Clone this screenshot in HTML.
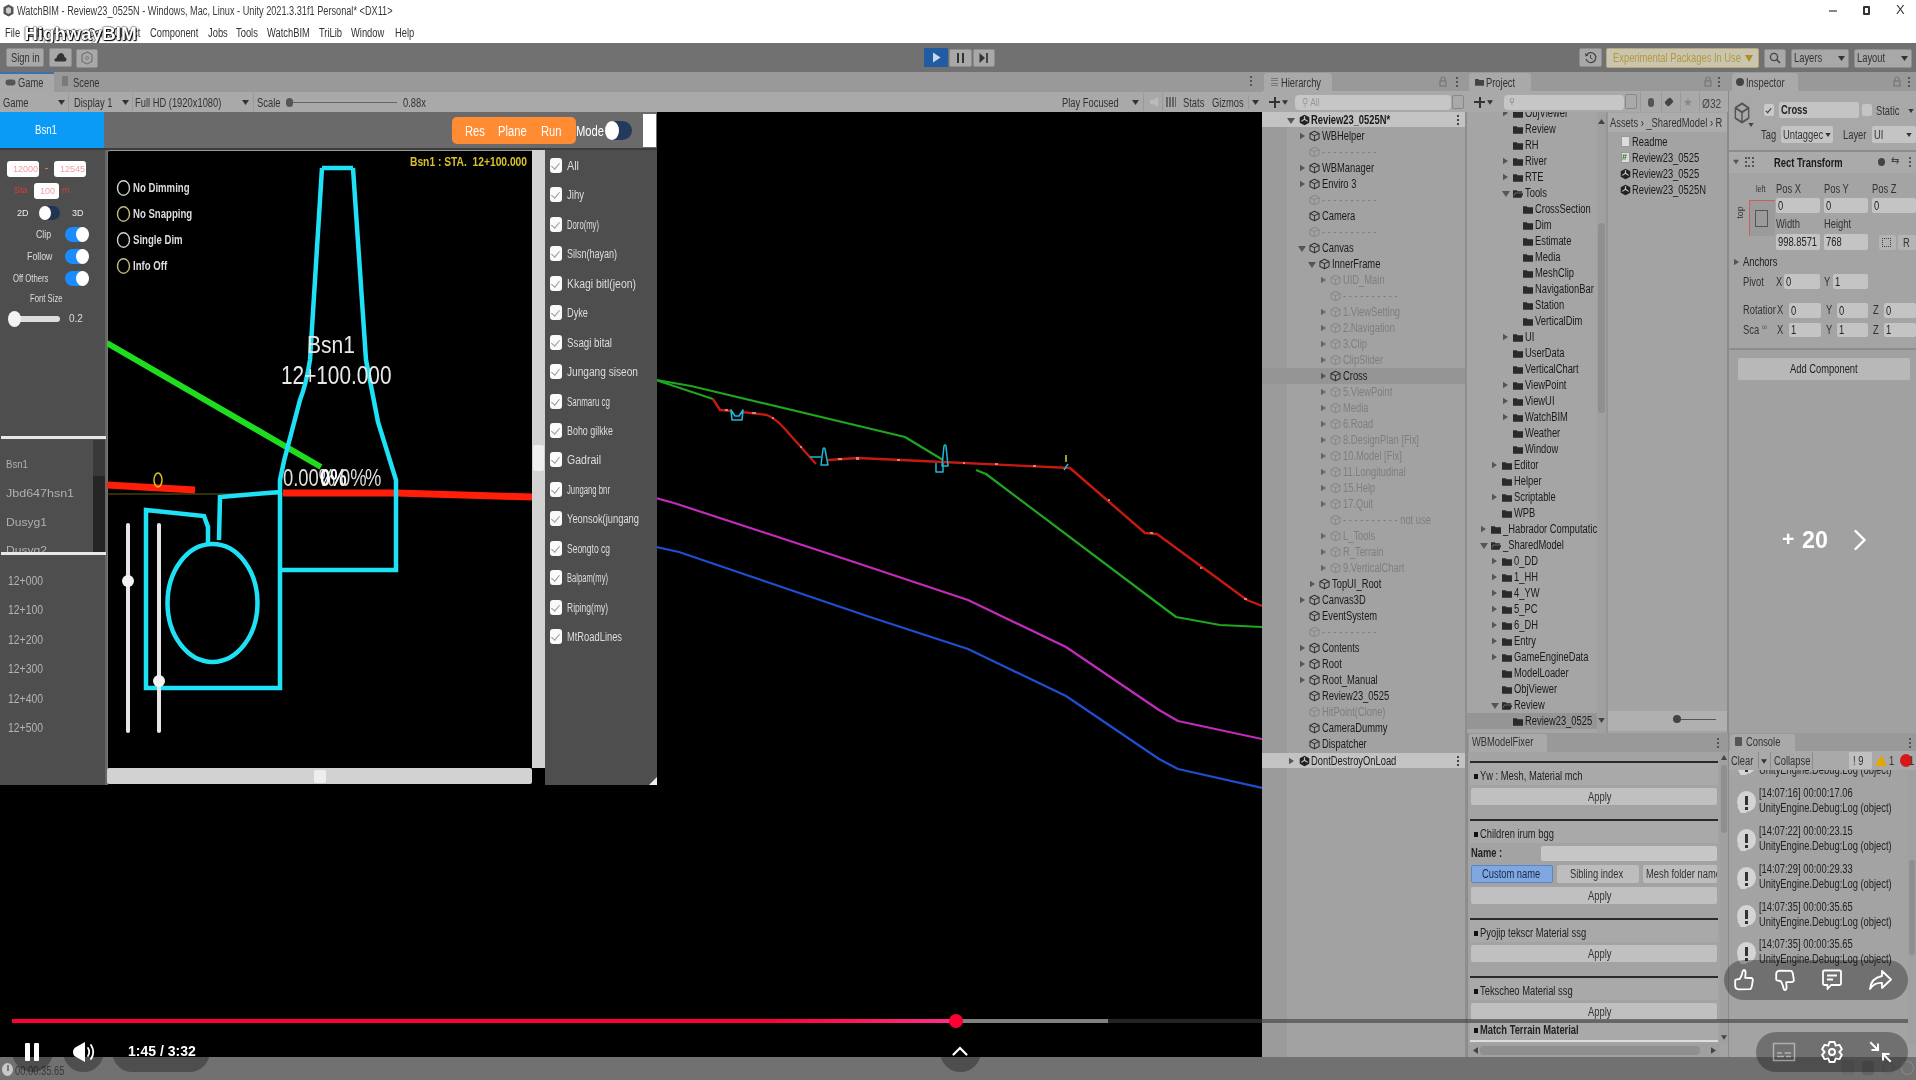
<!DOCTYPE html>
<html><head><meta charset="utf-8">
<style>
*{margin:0;padding:0;box-sizing:border-box}
html,body{width:1916px;height:1080px;overflow:hidden;background:#000;font-family:"Liberation Sans",sans-serif}
body{filter:blur(.6px)}
.a{position:absolute}
.t{position:absolute;white-space:nowrap;line-height:1}
.btn{background:#a8a8a8;border:1px solid #8e8e8e;border-radius:2px}
.c8{transform:scaleX(.8);transform-origin:0 0}
.c7{transform:scaleX(.7);transform-origin:0 0}
.inp{background:#fff;border-radius:3px}
.tg{width:23px;height:15px;border-radius:8px;background:#1a8cff}
.kn{width:13px;height:15px;border-radius:50%;background:#fff}
.ck{width:12px;height:15px;border-radius:3px;background:#fafafa}
.ck::after{content:"";position:absolute;left:3px;top:3px;width:4px;height:7px;border-right:1.3px solid #999;border-bottom:1.3px solid #999;transform:rotate(40deg)}
.c{transform:scaleX(.78);transform-origin:0 0}
#title{left:0;top:0;width:1916px;height:43px;background:#fff}
#tbar{left:0;top:43px;width:1916px;height:29px;background:#717171}
#gtabs{left:0;top:72px;width:1262px;height:20px;background:#999}
#gtool{left:0;top:92px;width:1262px;height:20px;background:#a9a9a9}
#game{left:0;top:112px;width:1262px;height:945px;background:#000}
#hier{left:1262px;top:72px;width:205px;height:985px;background:#a2a2a2}
#proj{left:1467px;top:72px;width:261px;height:661px;background:#a5a5a5}
#insp{left:1728px;top:72px;width:188px;height:661px;background:#a3a3a3}
#wbm{left:1467px;top:733px;width:261px;height:324px;background:#a5a5a5}
#cons{left:1728px;top:733px;width:188px;height:324px;background:#a5a5a5}
#status{left:0;top:1057px;width:1916px;height:23px;background:#717171}
</style></head><body>

<svg width="0" height="0" style="position:absolute">
 <defs>
  <symbol id="cube" viewBox="0 0 12 12"><path d="M6 0.8 L11 3.2 L11 8.8 L6 11.2 L1 8.8 L1 3.2Z M1 3.2 L6 5.6 L11 3.2 M6 5.6 L6 11.2" fill="none" stroke="currentColor" stroke-width="1.1" stroke-linejoin="round"/></symbol>
  <symbol id="unity" viewBox="0 0 12 12"><path d="M6 0.3 L11.2 3 L11.2 9 L6 11.7 L0.8 9 L0.8 3Z" fill="currentColor"/><path d="M6 1.8 L6 5.2 M6 5.2 L2.5 7.5 M6 5.2 L9.5 7.5" stroke="#c8c8c8" stroke-width="1.3"/></symbol>
  <symbol id="tri" viewBox="0 0 6 8"><path d="M0 0 L6 4 L0 8Z" fill="currentColor"/></symbol>
  <symbol id="tridown" viewBox="0 0 8 6"><path d="M0 0 L8 0 L4 6Z" fill="currentColor"/></symbol>
  <symbol id="folder" viewBox="0 0 12 10"><path d="M0 1 H4.5 L5.5 2.2 H12 V10 H0Z" fill="currentColor"/></symbol>
  <symbol id="folderopen" viewBox="0 0 12 10"><path d="M0 1 H4.5 L5.5 2.2 H11 V4 H2.5 L0 10Z M0 10 L3 4.8 H12.5 L10 10Z" fill="currentColor"/></symbol>
 </defs>
</svg>

<div id="title" class="a">
 <svg class="a" style="left:3px;top:4px" width="11" height="13" viewBox="0 0 11 13"><path d="M5.5 0.5 L10.5 3.2 L10.5 9.8 L5.5 12.5 L0.5 9.8 L0.5 3.2 Z" fill="#555"/><path d="M5.5 3 L8 4.5 L8 8.5 L5.5 10 L3 8.5 L3 4.5Z" fill="#ccc"/></svg>
 <div class="t" style="left:17px;top:5px;font-size:12px;color:#3a3a3a;transform:scaleX(.765);transform-origin:0 0">WatchBIM - Review23_0525N - Windows, Mac, Linux - Unity 2021.3.31f1 Personal* &lt;DX11&gt;</div>
 <div class="t c" style="left:5px;top:27px;font-size:12px;color:#333">File</div>
 <div class="t c" style="left:28px;top:27px;font-size:12px;color:#333">Edit &nbsp;&nbsp;Assets &nbsp;&nbsp;GameObject</div>
 <div class="t c" style="left:150px;top:27px;font-size:12px;color:#333">Component</div>
 <div class="t c" style="left:208px;top:27px;font-size:12px;color:#333">Jobs</div>
 <div class="t c" style="left:236px;top:27px;font-size:12px;color:#333">Tools</div>
 <div class="t c" style="left:267px;top:27px;font-size:12px;color:#333">WatchBIM</div>
 <div class="t c" style="left:319px;top:27px;font-size:12px;color:#333">TriLib</div>
 <div class="t c" style="left:351px;top:27px;font-size:12px;color:#333">Window</div>
 <div class="t c" style="left:395px;top:27px;font-size:12px;color:#333">Help</div>
 <div class="t" style="left:24px;top:24px;font-size:19px;font-weight:bold;color:#fff;text-shadow:0 0 2px #000,0 0 1px #000,1px 1px 1px #000">HighwayBIM</div>
 <div class="a" style="left:1829px;top:10px;width:8px;height:2px;background:#888"></div>
 <div class="a" style="left:1863px;top:6px;width:7px;height:9px;border:2px solid #333;border-radius:1px"></div>
 <div class="t" style="left:1896px;top:3px;font-size:13px;color:#333">X</div>
</div>


<div id="tbar" class="a">
 <div class="a btn" style="left:6px;top:5px;width:38px;height:19px"></div>
 <div class="t c" style="left:11px;top:9px;font-size:12px;color:#333">Sign in</div>
 <div class="a btn" style="left:49px;top:5px;width:23px;height:19px"></div>
 <svg class="a" style="left:54px;top:9px" width="13" height="10" viewBox="0 0 13 10"><path d="M2 9.5 Q0 9.5 0.5 7.5 Q1 6 2.5 6 Q3 2.5 6.5 1 Q10 1 10.5 5 Q12.5 5.5 12.5 7.5 Q12.5 9.5 10.5 9.5Z" fill="#333"/></svg>
 <div class="a btn" style="left:76px;top:6px;width:22px;height:19px"></div>
 <svg class="a" style="left:81px;top:8px" width="12" height="14" viewBox="0 0 12 14"><path d="M6 1 L11 3.5 L11 10.5 L6 13 L1 10.5 L1 3.5Z" fill="none" stroke="#666" stroke-width="1"/><circle cx="6" cy="7" r="1.5" fill="none" stroke="#777" stroke-width=".8"/></svg>
 <div class="a" style="left:924px;top:5px;width:24px;height:19px;background:#215ca3"></div>
 <svg class="a" style="left:932px;top:9px" width="9" height="11" viewBox="0 0 9 11"><path d="M1 0.5 L8.5 5.5 L1 10.5Z" fill="#c9d7ee"/></svg>
 <div class="a btn" style="left:949px;top:6px;width:23px;height:18px"></div>
 <div class="a" style="left:957px;top:10px;width:2px;height:10px;background:#333"></div>
 <div class="a" style="left:962px;top:10px;width:2px;height:10px;background:#333"></div>
 <div class="a btn" style="left:973px;top:6px;width:22px;height:18px"></div>
 <svg class="a" style="left:979px;top:10px" width="10" height="10" viewBox="0 0 10 10"><path d="M0.5 0 L6 5 L0.5 10Z" fill="#333"/><rect x="7" y="0" width="2" height="10" fill="#444"/></svg>
 <div class="a btn" style="left:1579px;top:5px;width:23px;height:19px"></div>
 <svg class="a" style="left:1584px;top:8px" width="13" height="13" viewBox="0 0 13 13"><path d="M2.5 4 A5 5 0 1 1 2 8" fill="none" stroke="#444" stroke-width="1.2"/><path d="M6.5 4 V7 L8.5 8" fill="none" stroke="#444" stroke-width="1"/><path d="M1 2 L1.5 5.5 L4.5 4.5Z" fill="#444"/></svg>
 <div class="a" style="left:1606px;top:5px;width:153px;height:20px;background:#cac5b0;border:1px solid #b8a878;border-radius:2px"></div>
 <div class="t c" style="left:1613px;top:9px;font-size:12px;color:#b39a3a">Experimental Packages In Use</div>
 <svg class="a" style="left:1745px;top:12px" width="8" height="7" viewBox="0 0 8 7"><path d="M0 0 L8 0 L4 7Z" fill="#b08f20"/></svg>
 <div class="a btn" style="left:1764px;top:6px;width:22px;height:19px"></div>
 <svg class="a" style="left:1769px;top:9px" width="12" height="12" viewBox="0 0 12 12"><circle cx="5" cy="5" r="3.6" fill="none" stroke="#444" stroke-width="1.3"/><path d="M7.5 7.5 L11 11" stroke="#444" stroke-width="1.6"/></svg>
 <div class="a btn" style="left:1791px;top:6px;width:58px;height:19px"></div>
 <div class="t c" style="left:1794px;top:9px;font-size:12px;color:#333">Layers</div>
 <svg class="a" style="left:1838px;top:13px" width="7" height="5" viewBox="0 0 7 5"><path d="M0 0 L7 0 L3.5 5Z" fill="#333"/></svg>
 <div class="a btn" style="left:1854px;top:6px;width:58px;height:19px"></div>
 <div class="t c" style="left:1857px;top:9px;font-size:12px;color:#333">Layout</div>
 <svg class="a" style="left:1901px;top:13px" width="7" height="5" viewBox="0 0 7 5"><path d="M0 0 L7 0 L3.5 5Z" fill="#333"/></svg>
</div>


<div id="gtabs" class="a">
 <div class="a" style="left:0;top:0;width:54px;height:20px;background:#a8a8a8;border-top:2px solid #3f6fb0"></div>
 <svg class="a" style="left:5px;top:7px" width="11" height="7" viewBox="0 0 11 7"><rect x="0.5" y="0.5" width="10" height="6" rx="3" fill="#555"/></svg>
 <div class="t c" style="left:18px;top:5px;font-size:12px;color:#333">Game</div>
 <div class="a" style="left:62px;top:4px;width:6px;height:10px;background:#7a7a7a;border-radius:1px"></div>
 <div class="t c" style="left:73px;top:5px;font-size:12px;color:#333">Scene</div>
 <div class="a" style="left:1250px;top:4px;width:2px;height:2px;background:#555;box-shadow:0 4px #555,0 8px #555"></div>
</div>
<div id="gtool" class="a">
 <div class="t c" style="left:3px;top:5px;font-size:12px;color:#333">Game</div>
 <svg class="a" style="left:58px;top:8px" width="7" height="5" viewBox="0 0 7 5"><path d="M0 0 L7 0 L3.5 5Z" fill="#333"/></svg>
 <div class="a" style="left:68px;top:1px;width:1px;height:18px;background:#999"></div>
 <div class="t c" style="left:74px;top:5px;font-size:12px;color:#333">Display 1</div>
 <svg class="a" style="left:122px;top:8px" width="7" height="5" viewBox="0 0 7 5"><path d="M0 0 L7 0 L3.5 5Z" fill="#333"/></svg>
 <div class="a" style="left:132px;top:1px;width:1px;height:18px;background:#999"></div>
 <div class="t c" style="left:135px;top:5px;font-size:12px;color:#333">Full HD (1920x1080)</div>
 <svg class="a" style="left:242px;top:8px" width="7" height="5" viewBox="0 0 7 5"><path d="M0 0 L7 0 L3.5 5Z" fill="#333"/></svg>
 <div class="a" style="left:253px;top:1px;width:1px;height:18px;background:#999"></div>
 <div class="t c" style="left:257px;top:5px;font-size:12px;color:#333">Scale</div>
 <div class="a" style="left:293px;top:10px;width:104px;height:1px;background:#666"></div>
 <div class="a" style="left:286px;top:6px;width:7px;height:9px;border-radius:4px;background:#555"></div>
 <div class="t c" style="left:403px;top:5px;font-size:12px;color:#333">0.88x</div>
 <div class="t c" style="left:1062px;top:5px;font-size:12px;color:#333">Play Focused</div>
 <svg class="a" style="left:1132px;top:8px" width="7" height="5" viewBox="0 0 7 5"><path d="M0 0 L7 0 L3.5 5Z" fill="#333"/></svg>
 <div class="a" style="left:1143px;top:1px;width:1px;height:18px;background:#999"></div>
 <svg class="a" style="left:1150px;top:5px" width="9" height="10" viewBox="0 0 9 10"><path d="M0 3 H3 L8 0 V10 L3 7 H0Z" fill="#bbb"/></svg>
 <div class="a" style="left:1162px;top:1px;width:1px;height:18px;background:#999"></div>
 <div class="a" style="left:1166px;top:5px;width:10px;height:10px;background:repeating-linear-gradient(90deg,#666 0 2px,#aaa 2px 3px)"></div>
 <div class="t c" style="left:1183px;top:5px;font-size:12px;color:#333">Stats</div>
 <div class="t c" style="left:1212px;top:5px;font-size:12px;color:#333">Gizmos</div>
 <div class="a" style="left:1248px;top:3px;width:1px;height:14px;background:#999"></div>
 <svg class="a" style="left:1252px;top:8px" width="7" height="5" viewBox="0 0 7 5"><path d="M0 0 L7 0 L3.5 5Z" fill="#333"/></svg>
</div>


<div id="game" class="a">
 <!-- overlay top band -->
 <div class="a" style="left:0;top:0;width:104px;height:36px;background:#0a9bf6"></div>
 <div class="t" style="left:35px;top:12px;font-size:12px;color:#fff;transform:scaleX(0.804);transform-origin:0 0">Bsn1</div>
 <div class="a" style="left:104px;top:0;width:553px;height:36px;background:#6a6a6a"></div>
 <div class="a" style="left:0;top:36px;width:657px;height:2px;background:#3c3c3c"></div>
 <div class="a" style="left:452px;top:5px;width:124px;height:27px;background:#ff8b33;border-radius:5px"></div>
 <div class="t c8" style="left:465px;top:12px;font-size:14px;color:#fff">Res</div>
 <div class="t c8" style="left:498px;top:12px;font-size:14px;color:#fff">Plane</div>
 <div class="t c8" style="left:541px;top:12px;font-size:14px;color:#fff">Run</div>
 <div class="t c8" style="left:576px;top:12px;font-size:14px;color:#fff">Mode</div>
 <div class="a" style="left:606px;top:9px;width:26px;height:19px;border-radius:10px;background:#243a5c"></div>
 <div class="a" style="left:605px;top:9px;width:14px;height:19px;border-radius:50%;background:#fff"></div>
 <div class="a" style="left:643px;top:2px;width:13px;height:33px;background:#fff"></div>
 <!-- left panel -->
 <div class="a" style="left:0;top:38px;width:105px;height:635px;background:#4e4e4e"></div>
 <div class="a" style="left:105px;top:38px;width:3px;height:635px;background:#676767"></div>
 <div class="a inp" style="left:7px;top:49px;width:32px;height:16px"></div>
 <div class="t" style="left:13px;top:53px;font-size:9px;color:#f0a0a0">12000</div>
 <div class="a" style="left:45px;top:56px;width:3px;height:1px;background:#e07070"></div>
 <div class="a inp" style="left:54px;top:49px;width:32px;height:16px"></div>
 <div class="t" style="left:60px;top:53px;font-size:9px;color:#f0a0a0">12545</div>
 <div class="t" style="left:14px;top:74px;font-size:9px;color:#e03a3a">Sta</div>
 <div class="a inp" style="left:34px;top:71px;width:25px;height:16px"></div>
 <div class="t" style="left:40px;top:75px;font-size:9px;color:#f0a0a0">100</div>
 <div class="t" style="left:62px;top:74px;font-size:9px;color:#e03a3a">m</div>
 <div class="t" style="left:17px;top:97px;font-size:9px;color:#eee">2D</div>
 <div class="a" style="left:40px;top:94px;width:20px;height:14px;border-radius:7px;background:#233452"></div>
 <div class="a" style="left:39px;top:94px;width:12px;height:14px;border-radius:50%;background:#fff"></div>
 <div class="t" style="left:72px;top:97px;font-size:9px;color:#eee">3D</div>
 <div class="t c8" style="left:36px;top:117px;font-size:11px;color:#ddd">Clip</div>
 <div class="a tg" style="left:65px;top:115px"></div><div class="a kn" style="left:76px;top:115px"></div>
 <div class="t c8" style="left:27px;top:139px;font-size:11px;color:#ddd">Follow</div>
 <div class="a tg" style="left:65px;top:137px"></div><div class="a kn" style="left:76px;top:137px"></div>
 <div class="t c7" style="left:13px;top:161px;font-size:11px;color:#ddd">Off Others</div>
 <div class="a tg" style="left:65px;top:159px"></div><div class="a kn" style="left:76px;top:159px"></div>
 <div class="t c7" style="left:30px;top:181px;font-size:11px;color:#ddd">Font Size</div>
 <div class="a" style="left:14px;top:204px;width:46px;height:6px;border-radius:3px;background:#ddd"></div>
 <div class="a" style="left:8px;top:199px;width:13px;height:16px;border-radius:50%;background:#f4f4f4"></div>
 <div class="t" style="left:69px;top:202px;font-size:10px;color:#ddd">0.2</div>
 <div class="a" style="left:1px;top:324px;width:105px;height:3px;background:#e8e8e8"></div>
 <div class="a" style="left:93px;top:328px;width:12px;height:36px;background:#393939"></div>
 <div class="a" style="left:93px;top:364px;width:12px;height:76px;background:#262424"></div>
 <div class="t" style="left:6px;top:347px;font-size:11px;color:#b0b0b0;transform:scaleX(0.877);transform-origin:0 0">Bsn1</div>
 <div class="t" style="left:6px;top:376px;font-size:11px;color:#b0b0b0;transform:scaleX(1.135);transform-origin:0 0">Jbd647hsn1</div>
 <div class="t" style="left:6px;top:405px;font-size:11px;color:#b0b0b0;transform:scaleX(1.100);transform-origin:0 0">Dusyg1</div>
 <div class="a" style="left:0;top:428px;width:93px;height:12px;overflow:hidden"><div class="t" style="left:6px;top:5px;font-size:11px;color:#b0b0b0;transform:scaleX(1.100);transform-origin:0 0">Dusyg2</div></div>
 <div class="a" style="left:1px;top:440px;width:105px;height:3px;background:#e8e8e8"></div>
 <div class="t c8" style="left:8px;top:462px;font-size:13px;color:#b4b4b4">12+000</div>
<div class="t c8" style="left:8px;top:491px;font-size:13px;color:#b4b4b4">12+100</div>
<div class="t c8" style="left:8px;top:521px;font-size:13px;color:#b4b4b4">12+200</div>
<div class="t c8" style="left:8px;top:550px;font-size:13px;color:#b4b4b4">12+300</div>
<div class="t c8" style="left:8px;top:580px;font-size:13px;color:#b4b4b4">12+400</div>
<div class="t c8" style="left:8px;top:609px;font-size:13px;color:#b4b4b4">12+500</div>
 <!-- black canvas border & scrollbars -->
 <div class="a" style="left:107px;top:38px;width:426px;height:619px;border-top:1px solid #9a9a9a;border-left:1px solid #777;border-top-left-radius:3px"></div>
 <div class="a" style="left:532px;top:38px;width:13px;height:618px;background:#d2d2d2"></div>
 <div class="a" style="left:533px;top:333px;width:11px;height:26px;background:#eeeeee;border-radius:2px"></div>
 <div class="a" style="left:107px;top:656px;width:425px;height:16px;background:#d2d2d2;border-radius:2px"></div>
 <div class="a" style="left:314px;top:658px;width:12px;height:13px;background:#eeeeee;border-radius:2px"></div>
 <div class="a" style="left:532px;top:656px;width:13px;height:16px;background:#000"></div>
 <!-- checkbox panel -->
 <div class="a" style="left:545px;top:38px;width:112px;height:635px;background:#4e4e4e"></div>
 <div class="a ck" style="left:550px;top:46px"></div><div class="t" style="left:567px;top:48px;font-size:12px;color:#ddd;transform:scaleX(0.899);transform-origin:0 0">All</div>
<div class="a ck" style="left:550px;top:75px"></div><div class="t" style="left:567px;top:77px;font-size:12px;color:#ddd;transform:scaleX(0.796);transform-origin:0 0">Jihy</div>
<div class="a ck" style="left:550px;top:105px"></div><div class="t" style="left:567px;top:107px;font-size:12px;color:#ddd;transform:scaleX(0.640);transform-origin:0 0">Doro(my)</div>
<div class="a ck" style="left:550px;top:134px"></div><div class="t" style="left:567px;top:136px;font-size:12px;color:#ddd;transform:scaleX(0.750);transform-origin:0 0">Silsn(hayan)</div>
<div class="a ck" style="left:550px;top:164px"></div><div class="t" style="left:567px;top:166px;font-size:12px;color:#ddd;transform:scaleX(0.869);transform-origin:0 0">Kkagi bitl(jeon)</div>
<div class="a ck" style="left:550px;top:193px"></div><div class="t" style="left:567px;top:195px;font-size:12px;color:#ddd;transform:scaleX(0.768);transform-origin:0 0">Dyke</div>
<div class="a ck" style="left:550px;top:223px"></div><div class="t" style="left:567px;top:225px;font-size:12px;color:#ddd;transform:scaleX(0.813);transform-origin:0 0">Ssagi bital</div>
<div class="a ck" style="left:550px;top:252px"></div><div class="t" style="left:567px;top:254px;font-size:12px;color:#ddd;transform:scaleX(0.844);transform-origin:0 0">Jungang siseon</div>
<div class="a ck" style="left:550px;top:282px"></div><div class="t" style="left:567px;top:284px;font-size:12px;color:#ddd;transform:scaleX(0.665);transform-origin:0 0">Sanmaru cg</div>
<div class="a ck" style="left:550px;top:311px"></div><div class="t" style="left:567px;top:313px;font-size:12px;color:#ddd;transform:scaleX(0.741);transform-origin:0 0">Boho gilkke</div>
<div class="a ck" style="left:550px;top:340px"></div><div class="t" style="left:567px;top:342px;font-size:12px;color:#ddd;transform:scaleX(0.879);transform-origin:0 0">Gadrail</div>
<div class="a ck" style="left:550px;top:370px"></div><div class="t" style="left:567px;top:372px;font-size:12px;color:#ddd;transform:scaleX(0.644);transform-origin:0 0">Jungang bnr</div>
<div class="a ck" style="left:550px;top:399px"></div><div class="t" style="left:567px;top:401px;font-size:12px;color:#ddd;transform:scaleX(0.780);transform-origin:0 0">Yeonsok(jungang</div>
<div class="a ck" style="left:550px;top:429px"></div><div class="t" style="left:567px;top:431px;font-size:12px;color:#ddd;transform:scaleX(0.708);transform-origin:0 0">Seongto cg</div>
<div class="a ck" style="left:550px;top:458px"></div><div class="t" style="left:567px;top:460px;font-size:12px;color:#ddd;transform:scaleX(0.634);transform-origin:0 0">Balpam(my)</div>
<div class="a ck" style="left:550px;top:488px"></div><div class="t" style="left:567px;top:490px;font-size:12px;color:#ddd;transform:scaleX(0.707);transform-origin:0 0">Riping(my)</div>
<div class="a ck" style="left:550px;top:517px"></div><div class="t" style="left:567px;top:519px;font-size:12px;color:#ddd;transform:scaleX(0.778);transform-origin:0 0">MtRoadLines</div>
 <svg class="a" style="left:649px;top:665px" width="8" height="8"><path d="M8 0 L8 8 L0 8Z" fill="#eee"/></svg>
</div>


<svg class="a" style="left:0;top:0" width="1262" height="1057" viewBox="0 0 1262 1057">
 <defs><clipPath id="cv"><rect x="107" y="151" width="425" height="617"/></clipPath>
 <clipPath id="pv"><rect x="657" y="112" width="605" height="945"/></clipPath></defs>
 <g clip-path="url(#cv)" fill="none" stroke-linejoin="miter">
  <path d="M107 343 L321 467" stroke="#1fdc1f" stroke-width="6"/>
  <path d="M107 485 L195 490" stroke="#ff1e0a" stroke-width="7"/>
  <path d="M107 494 L283 494" stroke="#6a5a10" stroke-width="1"/>
  <path d="M283 493 L396 493 L532 497" stroke="#ff1e0a" stroke-width="7"/>
  <path d="M322 168 L353 168 M322 168 L310 360 Q306 385 300 400 L284 461 L280 480 L280 688 L146 688 L146 510 L204 516 L208 527 L208 543 M353 168 L366 360 L378 422 L396 480 L396 570 L280 570 M280 492 L220 497 L219 540" stroke="#1ee1f5" stroke-width="4.5"/>
  <ellipse cx="212.5" cy="603" rx="45" ry="59" stroke="#1ee1f5" stroke-width="4.5"/>
  <path d="M128 525 L128 731 M159 525 L159 731" stroke="#e6e6e6" stroke-width="4" stroke-linecap="round"/>
  <circle cx="128" cy="581" r="6" fill="#f2f2f2"/>
  <circle cx="159" cy="681" r="6" fill="#f2f2f2"/>
  <g stroke="#d0d0d0" stroke-width="1.4"><ellipse cx="123.5" cy="188" rx="6" ry="7.2"/><ellipse cx="123.5" cy="214" rx="6" ry="7.2" stroke="#c8b880"/><ellipse cx="123.5" cy="240" rx="6" ry="7.2"/><ellipse cx="123.5" cy="266" rx="6" ry="7.2" stroke="#c8b880"/></g>
  <ellipse cx="158" cy="480" rx="4" ry="7" stroke="#d8c020" stroke-width="1.5"/>
 </g>
 <g clip-path="url(#pv)" fill="none" stroke-width="2.2" stroke-linejoin="round">
  <path d="M656 380 L691 386 L905 437 L943 460" stroke="#1fa51f"/>
  <path d="M656 380 L713 399" stroke="#1fa51f"/>
  <path d="M713 399 L720 410 L731 411 M742 412 L767 415 Q776 419 784 428 L816 464 M828 460 L858 458 L943 462 L1070 468 L1145 533 L1157 534 L1247 600 L1262 606" stroke="#c41a10" stroke-width="2.4"/>
  <path d="M976 470 L986 474 L1176 617 L1220 625 L1262 627" stroke="#1fa51f"/>
  <path d="M656 498 L674 503 L854 562 L968 600 L1066 647 L1159 710 L1178 721 L1262 739" stroke="#c22cba"/>
  <path d="M656 547 L679 552 L870 617 L968 649 L1066 696 L1159 759 L1178 769 L1262 788" stroke="#1f4fd0"/>
  <path d="M731 410 L732 420 L742 420 L743 410 L739 416 L735 416Z" stroke="#1fb8d8" stroke-width="1.6"/>
  <path d="M810 457 L821 457 M821 465 L823 449 Q824 447 825 449 L828 465Z" stroke="#1fb8d8" stroke-width="1.5"/>
  <path d="M942 466 L944 446 Q945 444 946 446 L948 466Z M936 463 L936 472 L943 472 L943 463" stroke="#1fb8d8" stroke-width="1.5"/>
  <path d="M1066 455 L1066 462" stroke="#e0d020" stroke-width="1.5"/>
  <path d="M1064 470 L1068 464" stroke="#1fb8d8" stroke-width="1.5"/>
  <g fill="#e0b0b0" stroke="none" opacity=".7"><rect x="725" y="409" width="3" height="2"/><rect x="752" y="412" width="4" height="2"/><rect x="772" y="417" width="2" height="2"/><rect x="800" y="446" width="2" height="2"/><rect x="838" y="458" width="4" height="2"/><rect x="856" y="457" width="3" height="3"/><rect x="897" y="459" width="3" height="2"/><rect x="963" y="462" width="2" height="2"/><rect x="995" y="463" width="3" height="2"/><rect x="1033" y="465" width="3" height="2"/><rect x="1108" y="499" width="2" height="2"/><rect x="1150" y="532" width="3" height="2"/><rect x="1200" y="567" width="2" height="2"/><rect x="1244" y="598" width="3" height="2"/></g>
 </g>
</svg>

<div class="t c8" style="left:133px;top:182px;font-size:12px;color:#ddd;font-weight:bold">No Dimming</div>
<div class="t c8" style="left:133px;top:208px;font-size:12px;color:#ddd;font-weight:bold">No Snapping</div>
<div class="t c8" style="left:133px;top:234px;font-size:12px;color:#ddd;font-weight:bold">Single Dim</div>
<div class="t c8" style="left:133px;top:260px;font-size:12px;color:#ddd;font-weight:bold">Info Off</div>
<div class="t" style="left:410px;top:156px;font-size:12px;color:#d8c22a;font-weight:bold;transform:scaleX(0.855);transform-origin:0 0">Bsn1 : STA.&nbsp; 12+100.000</div>
<div class="t" style="left:307px;top:333px;font-size:24px;color:#e8e8e8;transform:scaleX(0.877);transform-origin:0 0">Bsn1</div>
<div class="t c8" style="left:281px;top:362px;font-size:26px;color:#e8e8e8">12+100.000</div>
<div class="t c8" style="left:283px;top:467px;font-size:23px;color:#e0e0e0">0.00%</div>
<div class="t c8" style="left:320px;top:467px;font-size:23px;color:#fff;font-weight:bold">0%</div>
<div class="t c8" style="left:340px;top:467px;font-size:23px;color:#ddd">0%</div>
<div class="t c8" style="left:365px;top:467px;font-size:23px;color:#ddd">%</div>

<!--HIER-->
<div id="hier" class="a">
 <div class="a" style="left:0;top:0;width:205px;height:19px;background:#999"></div>
 <div class="a" style="left:2px;top:1px;width:68px;height:19px;background:#a9a9a9;border-radius:3px 3px 0 0"></div>
 <div class="a" style="left:9px;top:6px;width:7px;height:9px;background:repeating-linear-gradient(180deg,#777 0 1px,transparent 1px 2.5px)"></div>
 <div class="t c" style="left:19px;top:5px;font-size:12px;color:#333">Hierarchy</div>
 <svg class="a" style="left:177px;top:4px" width="8" height="11" viewBox="0 0 8 11"><path d="M2 5 V3 A2 2 0 0 1 6 3 V5" fill="none" stroke="#777" stroke-width="1.2"/><rect x="1" y="5" width="6" height="5" fill="none" stroke="#777" stroke-width="1.2"/></svg>
 <div class="a" style="left:194px;top:5px;width:2px;height:2px;background:#555;box-shadow:0 4px #555,0 8px #555"></div>
 <div class="a" style="left:0;top:19px;width:205px;height:21px;background:#a9a9a9"></div>
 <div class="a" style="left:7px;top:29px;width:11px;height:2px;background:#333"></div><div class="a" style="left:11.5px;top:24.5px;width:2px;height:11px;background:#333"></div>
 <svg class="a" style="left:20px;top:28px" width="6" height="5"><use href="#tridown" fill="#333" color="#333"/></svg>
 <div class="a" style="left:33px;top:23px;width:156px;height:15px;background:#c6c6c6;border-radius:4px"></div>
 <div class="t c" style="left:40px;top:25px;font-size:11px;color:#999">&#9906; All</div>
 <div class="a" style="left:190px;top:23px;width:12px;height:14px;border:1px solid #888;border-radius:2px"></div>
 <div class="a" style="left:0;top:40px;width:25px;height:945px;background:#9b9b9b"></div>
 <div class="a" style="left:203px;top:40px;width:2px;height:945px;background:#8e8e8e"></div>
 <div class="a" style="left:0;top:40px;width:203px;height:15px;background:#c3c3c3"></div>
 <div class="a" style="left:195px;top:43px;width:2px;height:2px;background:#444;box-shadow:0 4px #444,0 8px #444"></div>
 <svg class="a" style="left:37.0px;top:42px;color:#222" width="11" height="12"><use href="#unity"/></svg>
 <svg class="a" style="left:25.0px;top:46px;color:#555" width="8" height="6"><use href="#tridown"/></svg>
 <div class="t c" style="left:49.0px;top:42px;font-size:12px;color:#1a1a1a;font-weight:bold;">Review23_0525N*</div>
 <svg class="a" style="left:46.5px;top:58px;color:#333" width="11" height="12"><use href="#cube"/></svg>
 <svg class="a" style="left:37.5px;top:60px;color:#555" width="5" height="8"><use href="#tri"/></svg>
 <div class="t c" style="left:59.5px;top:58px;font-size:12px;color:#1a1a1a;">WBHelper</div>
 <svg class="a" style="left:46.5px;top:74px;color:#8a8a8a" width="11" height="12"><use href="#cube"/></svg>
 <div class="t c" style="left:59.5px;top:74px;font-size:12px;color:#7e7e7e;">- - - - - - - - - -</div>
 <svg class="a" style="left:46.5px;top:90px;color:#333" width="11" height="12"><use href="#cube"/></svg>
 <svg class="a" style="left:37.5px;top:92px;color:#555" width="5" height="8"><use href="#tri"/></svg>
 <div class="t c" style="left:59.5px;top:90px;font-size:12px;color:#1a1a1a;">WBManager</div>
 <svg class="a" style="left:46.5px;top:106px;color:#333" width="11" height="12"><use href="#cube"/></svg>
 <svg class="a" style="left:37.5px;top:108px;color:#555" width="5" height="8"><use href="#tri"/></svg>
 <div class="t c" style="left:59.5px;top:106px;font-size:12px;color:#1a1a1a;">Enviro 3</div>
 <svg class="a" style="left:46.5px;top:122px;color:#8a8a8a" width="11" height="12"><use href="#cube"/></svg>
 <div class="t c" style="left:59.5px;top:122px;font-size:12px;color:#7e7e7e;">- - - - - - - - - -</div>
 <svg class="a" style="left:46.5px;top:138px;color:#333" width="11" height="12"><use href="#cube"/></svg>
 <div class="t c" style="left:59.5px;top:138px;font-size:12px;color:#1a1a1a;">Camera</div>
 <svg class="a" style="left:46.5px;top:154px;color:#8a8a8a" width="11" height="12"><use href="#cube"/></svg>
 <div class="t c" style="left:59.5px;top:154px;font-size:12px;color:#7e7e7e;">- - - - - - - - - -</div>
 <svg class="a" style="left:46.5px;top:170px;color:#333" width="11" height="12"><use href="#cube"/></svg>
 <svg class="a" style="left:35.5px;top:174px;color:#555" width="8" height="6"><use href="#tridown"/></svg>
 <div class="t c" style="left:59.5px;top:170px;font-size:12px;color:#1a1a1a;">Canvas</div>
 <svg class="a" style="left:57.0px;top:186px;color:#333" width="11" height="12"><use href="#cube"/></svg>
 <svg class="a" style="left:46.0px;top:190px;color:#555" width="8" height="6"><use href="#tridown"/></svg>
 <div class="t c" style="left:70.0px;top:186px;font-size:12px;color:#1a1a1a;">InnerFrame</div>
 <svg class="a" style="left:67.5px;top:202px;color:#8a8a8a" width="11" height="12"><use href="#cube"/></svg>
 <svg class="a" style="left:58.5px;top:204px;color:#666" width="5" height="8"><use href="#tri"/></svg>
 <div class="t c" style="left:80.5px;top:202px;font-size:12px;color:#7e7e7e;">UID_Main</div>
 <svg class="a" style="left:67.5px;top:218px;color:#8a8a8a" width="11" height="12"><use href="#cube"/></svg>
 <div class="t c" style="left:80.5px;top:218px;font-size:12px;color:#7e7e7e;">- - - - - - - - - -</div>
 <svg class="a" style="left:67.5px;top:234px;color:#8a8a8a" width="11" height="12"><use href="#cube"/></svg>
 <svg class="a" style="left:58.5px;top:236px;color:#666" width="5" height="8"><use href="#tri"/></svg>
 <div class="t c" style="left:80.5px;top:234px;font-size:12px;color:#7e7e7e;">1.ViewSetting</div>
 <svg class="a" style="left:67.5px;top:250px;color:#8a8a8a" width="11" height="12"><use href="#cube"/></svg>
 <svg class="a" style="left:58.5px;top:252px;color:#666" width="5" height="8"><use href="#tri"/></svg>
 <div class="t c" style="left:80.5px;top:250px;font-size:12px;color:#7e7e7e;">2.Navigation</div>
 <svg class="a" style="left:67.5px;top:266px;color:#8a8a8a" width="11" height="12"><use href="#cube"/></svg>
 <svg class="a" style="left:58.5px;top:268px;color:#666" width="5" height="8"><use href="#tri"/></svg>
 <div class="t c" style="left:80.5px;top:266px;font-size:12px;color:#7e7e7e;">3.Clip</div>
 <svg class="a" style="left:67.5px;top:282px;color:#8a8a8a" width="11" height="12"><use href="#cube"/></svg>
 <svg class="a" style="left:58.5px;top:284px;color:#666" width="5" height="8"><use href="#tri"/></svg>
 <div class="t c" style="left:80.5px;top:282px;font-size:12px;color:#7e7e7e;">ClipSlider</div>
 <div class="a" style="left:0;top:296px;width:203px;height:16px;background:#959595"></div>
 <svg class="a" style="left:67.5px;top:298px;color:#333" width="11" height="12"><use href="#cube"/></svg>
 <svg class="a" style="left:58.5px;top:300px;color:#555" width="5" height="8"><use href="#tri"/></svg>
 <div class="t c" style="left:80.5px;top:298px;font-size:12px;color:#1a1a1a;">Cross</div>
 <svg class="a" style="left:67.5px;top:314px;color:#8a8a8a" width="11" height="12"><use href="#cube"/></svg>
 <svg class="a" style="left:58.5px;top:316px;color:#666" width="5" height="8"><use href="#tri"/></svg>
 <div class="t c" style="left:80.5px;top:314px;font-size:12px;color:#7e7e7e;">5.ViewPoint</div>
 <svg class="a" style="left:67.5px;top:330px;color:#8a8a8a" width="11" height="12"><use href="#cube"/></svg>
 <svg class="a" style="left:58.5px;top:332px;color:#666" width="5" height="8"><use href="#tri"/></svg>
 <div class="t c" style="left:80.5px;top:330px;font-size:12px;color:#7e7e7e;">Media</div>
 <svg class="a" style="left:67.5px;top:346px;color:#8a8a8a" width="11" height="12"><use href="#cube"/></svg>
 <svg class="a" style="left:58.5px;top:348px;color:#666" width="5" height="8"><use href="#tri"/></svg>
 <div class="t c" style="left:80.5px;top:346px;font-size:12px;color:#7e7e7e;">6.Road</div>
 <svg class="a" style="left:67.5px;top:362px;color:#8a8a8a" width="11" height="12"><use href="#cube"/></svg>
 <svg class="a" style="left:58.5px;top:364px;color:#666" width="5" height="8"><use href="#tri"/></svg>
 <div class="t c" style="left:80.5px;top:362px;font-size:12px;color:#7e7e7e;">8.DesignPlan [Fix]</div>
 <svg class="a" style="left:67.5px;top:378px;color:#8a8a8a" width="11" height="12"><use href="#cube"/></svg>
 <svg class="a" style="left:58.5px;top:380px;color:#666" width="5" height="8"><use href="#tri"/></svg>
 <div class="t c" style="left:80.5px;top:378px;font-size:12px;color:#7e7e7e;">10.Model [Fix]</div>
 <svg class="a" style="left:67.5px;top:394px;color:#8a8a8a" width="11" height="12"><use href="#cube"/></svg>
 <svg class="a" style="left:58.5px;top:396px;color:#666" width="5" height="8"><use href="#tri"/></svg>
 <div class="t c" style="left:80.5px;top:394px;font-size:12px;color:#7e7e7e;">11.Longitudinal</div>
 <svg class="a" style="left:67.5px;top:410px;color:#8a8a8a" width="11" height="12"><use href="#cube"/></svg>
 <svg class="a" style="left:58.5px;top:412px;color:#666" width="5" height="8"><use href="#tri"/></svg>
 <div class="t c" style="left:80.5px;top:410px;font-size:12px;color:#7e7e7e;">15.Help</div>
 <svg class="a" style="left:67.5px;top:426px;color:#8a8a8a" width="11" height="12"><use href="#cube"/></svg>
 <svg class="a" style="left:58.5px;top:428px;color:#666" width="5" height="8"><use href="#tri"/></svg>
 <div class="t c" style="left:80.5px;top:426px;font-size:12px;color:#7e7e7e;">17.Quit</div>
 <svg class="a" style="left:67.5px;top:442px;color:#8a8a8a" width="11" height="12"><use href="#cube"/></svg>
 <div class="t c" style="left:80.5px;top:442px;font-size:12px;color:#7e7e7e;">- - - - - - - - - - not use</div>
 <svg class="a" style="left:67.5px;top:458px;color:#8a8a8a" width="11" height="12"><use href="#cube"/></svg>
 <svg class="a" style="left:58.5px;top:460px;color:#666" width="5" height="8"><use href="#tri"/></svg>
 <div class="t c" style="left:80.5px;top:458px;font-size:12px;color:#7e7e7e;">L_Tools</div>
 <svg class="a" style="left:67.5px;top:474px;color:#8a8a8a" width="11" height="12"><use href="#cube"/></svg>
 <svg class="a" style="left:58.5px;top:476px;color:#666" width="5" height="8"><use href="#tri"/></svg>
 <div class="t c" style="left:80.5px;top:474px;font-size:12px;color:#7e7e7e;">R_Terrain</div>
 <svg class="a" style="left:67.5px;top:490px;color:#8a8a8a" width="11" height="12"><use href="#cube"/></svg>
 <svg class="a" style="left:58.5px;top:492px;color:#666" width="5" height="8"><use href="#tri"/></svg>
 <div class="t c" style="left:80.5px;top:490px;font-size:12px;color:#7e7e7e;">9.VerticalChart</div>
 <svg class="a" style="left:57.0px;top:506px;color:#333" width="11" height="12"><use href="#cube"/></svg>
 <svg class="a" style="left:48.0px;top:508px;color:#555" width="5" height="8"><use href="#tri"/></svg>
 <div class="t c" style="left:70.0px;top:506px;font-size:12px;color:#1a1a1a;">TopUI_Root</div>
 <svg class="a" style="left:46.5px;top:522px;color:#333" width="11" height="12"><use href="#cube"/></svg>
 <svg class="a" style="left:37.5px;top:524px;color:#555" width="5" height="8"><use href="#tri"/></svg>
 <div class="t c" style="left:59.5px;top:522px;font-size:12px;color:#1a1a1a;">Canvas3D</div>
 <svg class="a" style="left:46.5px;top:538px;color:#333" width="11" height="12"><use href="#cube"/></svg>
 <div class="t c" style="left:59.5px;top:538px;font-size:12px;color:#1a1a1a;">EventSystem</div>
 <svg class="a" style="left:46.5px;top:554px;color:#8a8a8a" width="11" height="12"><use href="#cube"/></svg>
 <div class="t c" style="left:59.5px;top:554px;font-size:12px;color:#7e7e7e;">- - - - - - - - - -</div>
 <svg class="a" style="left:46.5px;top:570px;color:#333" width="11" height="12"><use href="#cube"/></svg>
 <svg class="a" style="left:37.5px;top:572px;color:#555" width="5" height="8"><use href="#tri"/></svg>
 <div class="t c" style="left:59.5px;top:570px;font-size:12px;color:#1a1a1a;">Contents</div>
 <svg class="a" style="left:46.5px;top:586px;color:#333" width="11" height="12"><use href="#cube"/></svg>
 <svg class="a" style="left:37.5px;top:588px;color:#555" width="5" height="8"><use href="#tri"/></svg>
 <div class="t c" style="left:59.5px;top:586px;font-size:12px;color:#1a1a1a;">Root</div>
 <svg class="a" style="left:46.5px;top:602px;color:#333" width="11" height="12"><use href="#cube"/></svg>
 <svg class="a" style="left:37.5px;top:604px;color:#555" width="5" height="8"><use href="#tri"/></svg>
 <div class="t c" style="left:59.5px;top:602px;font-size:12px;color:#1a1a1a;">Root_Manual</div>
 <svg class="a" style="left:46.5px;top:618px;color:#333" width="11" height="12"><use href="#cube"/></svg>
 <div class="t c" style="left:59.5px;top:618px;font-size:12px;color:#1a1a1a;">Review23_0525</div>
 <svg class="a" style="left:46.5px;top:634px;color:#8a8a8a" width="11" height="12"><use href="#cube"/></svg>
 <div class="t c" style="left:59.5px;top:634px;font-size:12px;color:#7e7e7e;">HitPoint(Clone)</div>
 <svg class="a" style="left:46.5px;top:650px;color:#333" width="11" height="12"><use href="#cube"/></svg>
 <div class="t c" style="left:59.5px;top:650px;font-size:12px;color:#1a1a1a;">CameraDummy</div>
 <svg class="a" style="left:46.5px;top:666px;color:#333" width="11" height="12"><use href="#cube"/></svg>
 <div class="t c" style="left:59.5px;top:666px;font-size:12px;color:#1a1a1a;">Dispatcher</div>
 <div class="a" style="left:0;top:681px;width:203px;height:15px;background:#c3c3c3"></div>
 <div class="a" style="left:195px;top:684px;width:2px;height:2px;background:#444;box-shadow:0 4px #444,0 8px #444"></div>
 <svg class="a" style="left:37.0px;top:683px;color:#222" width="11" height="12"><use href="#unity"/></svg>
 <svg class="a" style="left:27.0px;top:685px;color:#555" width="5" height="8"><use href="#tri"/></svg>
 <div class="t c" style="left:49.0px;top:683px;font-size:12px;color:#1a1a1a;">DontDestroyOnLoad</div>
</div>
<!--/HIER-->
<!--PROJ-->
<div id="proj" class="a">
 <div class="a" style="left:0;top:0;width:261px;height:19px;background:#999"></div>
 <div class="a" style="left:2px;top:1px;width:62px;height:19px;background:#a9a9a9;border-radius:3px 3px 0 0"></div>
 <svg class="a" style="left:8px;top:6px;color:#444" width="9" height="8"><use href="#folder"/></svg>
 <div class="t c" style="left:19px;top:5px;font-size:12px;color:#333">Project</div>
 <svg class="a" style="left:237px;top:4px" width="8" height="11" viewBox="0 0 8 11"><path d="M2 5 V3 A2 2 0 0 1 6 3 V5" fill="none" stroke="#777" stroke-width="1.2"/><rect x="1" y="5" width="6" height="5" fill="none" stroke="#777" stroke-width="1.2"/></svg>
 <div class="a" style="left:251px;top:5px;width:2px;height:2px;background:#555;box-shadow:0 4px #555,0 8px #555"></div>
 <div class="a" style="left:0;top:19px;width:261px;height:21px;background:#a9a9a9"></div>
 <div class="a" style="left:7px;top:29px;width:11px;height:2px;background:#333"></div><div class="a" style="left:11.5px;top:24.5px;width:2px;height:11px;background:#333"></div>
 <svg class="a" style="left:20px;top:28px;color:#333" width="6" height="5"><use href="#tridown"/></svg>
 <div class="a" style="left:37px;top:23px;width:120px;height:15px;background:#c6c6c6;border-radius:4px"></div>
 <div class="t" style="left:42px;top:26px;font-size:8px;color:#888">&#9906;</div>
 <div class="a" style="left:158px;top:22px;width:12px;height:15px;border:1px solid #888;border-radius:2px"></div>
 <div class="a" style="left:173px;top:20px;width:1px;height:19px;background:#999"></div>
 <div class="a" style="left:194px;top:20px;width:1px;height:19px;background:#999"></div>
 <div class="a" style="left:213px;top:20px;width:1px;height:19px;background:#999"></div>
 <div class="a" style="left:232px;top:20px;width:1px;height:19px;background:#999"></div>
 <div class="a" style="left:181px;top:26px;width:6px;height:9px;background:#555;border-radius:3px"></div>
 <div class="a" style="left:198px;top:27px;width:8px;height:6px;background:#444;transform:rotate(-45deg);border-radius:2px"></div>
 <div class="t" style="left:216px;top:25px;font-size:11px;color:#888">&#9733;</div>
 <div class="t c" style="left:235px;top:25px;font-size:13px;color:#444">&#216;32</div>
 <div class="a" style="left:0;top:40px;width:130px;height:621px;background:#a5a5a5;overflow:hidden">
 <svg class="a" style="left:45.6px;top:-3px;color:#2a2a2a" width="10" height="9"><use href="#folder"/></svg>
 <svg class="a" style="left:35.6px;top:-3px;color:#555" width="5" height="8"><use href="#tri"/></svg>
 <div class="t c" style="left:57.6px;top:-5px;font-size:12px;color:#1a1a1a">ObjViewer</div>
 <svg class="a" style="left:45.6px;top:13px;color:#2a2a2a" width="10" height="9"><use href="#folder"/></svg>
 <div class="t c" style="left:57.6px;top:11px;font-size:12px;color:#1a1a1a">Review</div>
 <svg class="a" style="left:45.6px;top:29px;color:#2a2a2a" width="10" height="9"><use href="#folder"/></svg>
 <div class="t c" style="left:57.6px;top:27px;font-size:12px;color:#1a1a1a">RH</div>
 <svg class="a" style="left:45.6px;top:45px;color:#2a2a2a" width="10" height="9"><use href="#folder"/></svg>
 <svg class="a" style="left:35.6px;top:45px;color:#555" width="5" height="8"><use href="#tri"/></svg>
 <div class="t c" style="left:57.6px;top:43px;font-size:12px;color:#1a1a1a">River</div>
 <svg class="a" style="left:45.6px;top:61px;color:#2a2a2a" width="10" height="9"><use href="#folder"/></svg>
 <svg class="a" style="left:35.6px;top:61px;color:#555" width="5" height="8"><use href="#tri"/></svg>
 <div class="t c" style="left:57.6px;top:59px;font-size:12px;color:#1a1a1a">RTE</div>
 <svg class="a" style="left:45.6px;top:77px;color:#2a2a2a" width="10" height="9"><use href="#folderopen"/></svg>
 <svg class="a" style="left:34.6px;top:79px;color:#555" width="8" height="6"><use href="#tridown"/></svg>
 <div class="t c" style="left:57.6px;top:75px;font-size:12px;color:#1a1a1a">Tools</div>
 <svg class="a" style="left:56.4px;top:93px;color:#2a2a2a" width="10" height="9"><use href="#folder"/></svg>
 <div class="t c" style="left:68.4px;top:91px;font-size:12px;color:#1a1a1a">CrossSection</div>
 <svg class="a" style="left:56.4px;top:109px;color:#2a2a2a" width="10" height="9"><use href="#folder"/></svg>
 <div class="t c" style="left:68.4px;top:107px;font-size:12px;color:#1a1a1a">Dim</div>
 <svg class="a" style="left:56.4px;top:125px;color:#2a2a2a" width="10" height="9"><use href="#folder"/></svg>
 <div class="t c" style="left:68.4px;top:123px;font-size:12px;color:#1a1a1a">Estimate</div>
 <svg class="a" style="left:56.4px;top:141px;color:#2a2a2a" width="10" height="9"><use href="#folder"/></svg>
 <div class="t c" style="left:68.4px;top:139px;font-size:12px;color:#1a1a1a">Media</div>
 <svg class="a" style="left:56.4px;top:157px;color:#2a2a2a" width="10" height="9"><use href="#folder"/></svg>
 <div class="t c" style="left:68.4px;top:155px;font-size:12px;color:#1a1a1a">MeshClip</div>
 <svg class="a" style="left:56.4px;top:173px;color:#2a2a2a" width="10" height="9"><use href="#folder"/></svg>
 <div class="t c" style="left:68.4px;top:171px;font-size:12px;color:#1a1a1a">NavigationBar</div>
 <svg class="a" style="left:56.4px;top:189px;color:#2a2a2a" width="10" height="9"><use href="#folder"/></svg>
 <div class="t c" style="left:68.4px;top:187px;font-size:12px;color:#1a1a1a">Station</div>
 <svg class="a" style="left:56.4px;top:205px;color:#2a2a2a" width="10" height="9"><use href="#folder"/></svg>
 <div class="t c" style="left:68.4px;top:203px;font-size:12px;color:#1a1a1a">VerticalDim</div>
 <svg class="a" style="left:45.6px;top:221px;color:#2a2a2a" width="10" height="9"><use href="#folder"/></svg>
 <svg class="a" style="left:35.6px;top:221px;color:#555" width="5" height="8"><use href="#tri"/></svg>
 <div class="t c" style="left:57.6px;top:219px;font-size:12px;color:#1a1a1a">UI</div>
 <svg class="a" style="left:45.6px;top:237px;color:#2a2a2a" width="10" height="9"><use href="#folder"/></svg>
 <div class="t c" style="left:57.6px;top:235px;font-size:12px;color:#1a1a1a">UserData</div>
 <svg class="a" style="left:45.6px;top:253px;color:#2a2a2a" width="10" height="9"><use href="#folder"/></svg>
 <div class="t c" style="left:57.6px;top:251px;font-size:12px;color:#1a1a1a">VerticalChart</div>
 <svg class="a" style="left:45.6px;top:269px;color:#2a2a2a" width="10" height="9"><use href="#folder"/></svg>
 <svg class="a" style="left:35.6px;top:269px;color:#555" width="5" height="8"><use href="#tri"/></svg>
 <div class="t c" style="left:57.6px;top:267px;font-size:12px;color:#1a1a1a">ViewPoint</div>
 <svg class="a" style="left:45.6px;top:285px;color:#2a2a2a" width="10" height="9"><use href="#folder"/></svg>
 <svg class="a" style="left:35.6px;top:285px;color:#555" width="5" height="8"><use href="#tri"/></svg>
 <div class="t c" style="left:57.6px;top:283px;font-size:12px;color:#1a1a1a">ViewUI</div>
 <svg class="a" style="left:45.6px;top:301px;color:#2a2a2a" width="10" height="9"><use href="#folder"/></svg>
 <svg class="a" style="left:35.6px;top:301px;color:#555" width="5" height="8"><use href="#tri"/></svg>
 <div class="t c" style="left:57.6px;top:299px;font-size:12px;color:#1a1a1a">WatchBIM</div>
 <svg class="a" style="left:45.6px;top:317px;color:#2a2a2a" width="10" height="9"><use href="#folder"/></svg>
 <div class="t c" style="left:57.6px;top:315px;font-size:12px;color:#1a1a1a">Weather</div>
 <svg class="a" style="left:45.6px;top:333px;color:#2a2a2a" width="10" height="9"><use href="#folder"/></svg>
 <div class="t c" style="left:57.6px;top:331px;font-size:12px;color:#1a1a1a">Window</div>
 <svg class="a" style="left:34.8px;top:349px;color:#2a2a2a" width="10" height="9"><use href="#folder"/></svg>
 <svg class="a" style="left:24.8px;top:349px;color:#555" width="5" height="8"><use href="#tri"/></svg>
 <div class="t c" style="left:46.8px;top:347px;font-size:12px;color:#1a1a1a">Editor</div>
 <svg class="a" style="left:34.8px;top:365px;color:#2a2a2a" width="10" height="9"><use href="#folder"/></svg>
 <div class="t c" style="left:46.8px;top:363px;font-size:12px;color:#1a1a1a">Helper</div>
 <svg class="a" style="left:34.8px;top:381px;color:#2a2a2a" width="10" height="9"><use href="#folder"/></svg>
 <svg class="a" style="left:24.8px;top:381px;color:#555" width="5" height="8"><use href="#tri"/></svg>
 <div class="t c" style="left:46.8px;top:379px;font-size:12px;color:#1a1a1a">Scriptable</div>
 <svg class="a" style="left:34.8px;top:397px;color:#2a2a2a" width="10" height="9"><use href="#folder"/></svg>
 <div class="t c" style="left:46.8px;top:395px;font-size:12px;color:#1a1a1a">WPB</div>
 <svg class="a" style="left:24.0px;top:413px;color:#2a2a2a" width="10" height="9"><use href="#folder"/></svg>
 <svg class="a" style="left:14.0px;top:413px;color:#555" width="5" height="8"><use href="#tri"/></svg>
 <div class="t c" style="left:36.0px;top:411px;font-size:12px;color:#1a1a1a">_Habrador Computatic</div>
 <svg class="a" style="left:24.0px;top:429px;color:#2a2a2a" width="10" height="9"><use href="#folderopen"/></svg>
 <svg class="a" style="left:13.0px;top:431px;color:#555" width="8" height="6"><use href="#tridown"/></svg>
 <div class="t c" style="left:36.0px;top:427px;font-size:12px;color:#1a1a1a">_SharedModel</div>
 <svg class="a" style="left:34.8px;top:445px;color:#2a2a2a" width="10" height="9"><use href="#folder"/></svg>
 <svg class="a" style="left:24.8px;top:445px;color:#555" width="5" height="8"><use href="#tri"/></svg>
 <div class="t c" style="left:46.8px;top:443px;font-size:12px;color:#1a1a1a">0_DD</div>
 <svg class="a" style="left:34.8px;top:461px;color:#2a2a2a" width="10" height="9"><use href="#folder"/></svg>
 <svg class="a" style="left:24.8px;top:461px;color:#555" width="5" height="8"><use href="#tri"/></svg>
 <div class="t c" style="left:46.8px;top:459px;font-size:12px;color:#1a1a1a">1_HH</div>
 <svg class="a" style="left:34.8px;top:477px;color:#2a2a2a" width="10" height="9"><use href="#folder"/></svg>
 <svg class="a" style="left:24.8px;top:477px;color:#555" width="5" height="8"><use href="#tri"/></svg>
 <div class="t c" style="left:46.8px;top:475px;font-size:12px;color:#1a1a1a">4_YW</div>
 <svg class="a" style="left:34.8px;top:493px;color:#2a2a2a" width="10" height="9"><use href="#folder"/></svg>
 <svg class="a" style="left:24.8px;top:493px;color:#555" width="5" height="8"><use href="#tri"/></svg>
 <div class="t c" style="left:46.8px;top:491px;font-size:12px;color:#1a1a1a">5_PC</div>
 <svg class="a" style="left:34.8px;top:509px;color:#2a2a2a" width="10" height="9"><use href="#folder"/></svg>
 <svg class="a" style="left:24.8px;top:509px;color:#555" width="5" height="8"><use href="#tri"/></svg>
 <div class="t c" style="left:46.8px;top:507px;font-size:12px;color:#1a1a1a">6_DH</div>
 <svg class="a" style="left:34.8px;top:525px;color:#2a2a2a" width="10" height="9"><use href="#folder"/></svg>
 <svg class="a" style="left:24.8px;top:525px;color:#555" width="5" height="8"><use href="#tri"/></svg>
 <div class="t c" style="left:46.8px;top:523px;font-size:12px;color:#1a1a1a">Entry</div>
 <svg class="a" style="left:34.8px;top:541px;color:#2a2a2a" width="10" height="9"><use href="#folder"/></svg>
 <svg class="a" style="left:24.8px;top:541px;color:#555" width="5" height="8"><use href="#tri"/></svg>
 <div class="t c" style="left:46.8px;top:539px;font-size:12px;color:#1a1a1a">GameEngineData</div>
 <svg class="a" style="left:34.8px;top:557px;color:#2a2a2a" width="10" height="9"><use href="#folder"/></svg>
 <div class="t c" style="left:46.8px;top:555px;font-size:12px;color:#1a1a1a">ModelLoader</div>
 <svg class="a" style="left:34.8px;top:573px;color:#2a2a2a" width="10" height="9"><use href="#folder"/></svg>
 <div class="t c" style="left:46.8px;top:571px;font-size:12px;color:#1a1a1a">ObjViewer</div>
 <svg class="a" style="left:34.8px;top:589px;color:#2a2a2a" width="10" height="9"><use href="#folderopen"/></svg>
 <svg class="a" style="left:23.8px;top:591px;color:#555" width="8" height="6"><use href="#tridown"/></svg>
 <div class="t c" style="left:46.8px;top:587px;font-size:12px;color:#1a1a1a">Review</div>
 <div class="a" style="left:0;top:601px;width:130px;height:16px;background:#959595"></div>
 <svg class="a" style="left:45.6px;top:605px;color:#2a2a2a" width="10" height="9"><use href="#folder"/></svg>
 <div class="t c" style="left:57.6px;top:603px;font-size:12px;color:#1a1a1a">Review23_0525</div>
 </div>
 <div class="a" style="left:130px;top:40px;width:9px;height:621px;background:#a0a0a0"></div>
 <div class="a" style="left:131px;top:151px;width:7px;height:190px;background:#8f8f8f;border-radius:3px"></div>
 <svg class="a" style="left:131px;top:47px" width="7" height="5"><path d="M0 5 L3.5 0 L7 5Z" fill="#444"/></svg>
 <svg class="a" style="left:131px;top:646px;color:#444" width="7" height="5"><use href="#tridown"/></svg>
 <div class="a" style="left:139px;top:40px;width:2px;height:621px;background:#959595"></div>
 <div class="a" style="left:141px;top:40px;width:120px;height:621px;background:#a3a3a3"></div>
 <div class="a" style="left:141px;top:41px;width:120px;height:19px;background:#acacac"></div>
 <div class="t c" style="left:143px;top:45px;font-size:12px;color:#333">Assets &#8250; _SharedModel &#8250; R</div>
 <div class="a" style="left:154px;top:64px;width:9px;height:11px;background:#ddd;border:1px solid #999"></div>
 <div class="t c" style="left:165px;top:64px;font-size:12px;color:#1a1a1a">Readme</div>
 <div class="a" style="left:154px;top:80px;width:9px;height:11px;background:#d8e0d8;border:1px solid #999"></div><div class="t" style="left:155px;top:81px;font-size:9px;color:#2a6a3a;font-weight:bold">#</div>
 <div class="t c" style="left:165px;top:80px;font-size:12px;color:#1a1a1a">Review23_0525</div>
 <svg class="a" style="left:153px;top:96px;color:#222" width="11" height="12"><use href="#unity"/></svg>
 <div class="t c" style="left:165px;top:96px;font-size:12px;color:#1a1a1a">Review23_0525</div>
 <svg class="a" style="left:153px;top:112px;color:#222" width="11" height="12"><use href="#unity"/></svg>
 <div class="t c" style="left:165px;top:112px;font-size:12px;color:#1a1a1a">Review23_0525N</div>
 <div class="a" style="left:141px;top:639px;width:120px;height:20px;background:#b0b0b0"></div>
 <div class="a" style="left:213px;top:647px;width:36px;height:1px;background:#555"></div>
 <div class="a" style="left:206px;top:643px;width:8px;height:8px;border-radius:50%;background:#444"></div>
 <div class="a" style="left:260px;top:40px;width:1px;height:621px;background:#8a8a8a"></div>
</div>
<!--/PROJ-->
<!--INSP-->
<div id="insp" class="a">
 <div class="a" style="left:0;top:0;width:188px;height:19px;background:#999"></div>
 <div class="a" style="left:4px;top:1px;width:66px;height:19px;background:#a9a9a9;border-radius:3px 3px 0 0"></div>
 <div class="a" style="left:8px;top:6px;width:8px;height:8px;border-radius:50%;background:#444"></div>
 <div class="t c" style="left:18px;top:5.0px;font-size:12px;color:#333;">Inspector</div>
 <svg class="a" style="left:165px;top:4px" width="8" height="11" viewBox="0 0 8 11"><path d="M2 5 V3 A2 2 0 0 1 6 3 V5" fill="none" stroke="#777" stroke-width="1.2"/><rect x="1" y="5" width="6" height="5" fill="none" stroke="#777" stroke-width="1.2"/></svg>
 <div class="a" style="left:180px;top:5px;width:2px;height:2px;background:#555;box-shadow:0 4px #555,0 8px #555"></div>
 <div class="a" style="left:0;top:19px;width:188px;height:60px;background:#a8a8a8"></div>
 <svg class="a" style="left:6px;top:30px;color:#555" width="16" height="22" viewBox="0 0 12 12" preserveAspectRatio="none"><use href="#cube"/></svg>
 <svg class="a" style="left:20px;top:51px;color:#444" width="6" height="4"><use href="#tridown"/></svg>
 <div class="a" style="left:36px;top:32px;width:10px;height:12px;background:#c9c9c9;border-radius:2px"></div>
 <div class="a" style="left:39px;top:35px;width:3px;height:6px;border-right:1.3px solid #333;border-bottom:1.3px solid #333;transform:rotate(40deg)"></div>
 <div class="a" style="left:51px;top:30px;width:80px;height:16px;background:#c4c4c4;border-radius:2px"></div>
 <div class="t c" style="left:53px;top:32.0px;font-size:12px;color:#222;font-weight:bold;">Cross</div>
 <div class="a" style="left:134px;top:32px;width:10px;height:12px;background:#c4c4c4;border-radius:2px"></div>
 <div class="t c" style="left:148px;top:33.0px;font-size:12px;color:#333;">Static</div>
 <svg class="a" style="left:180px;top:37px;color:#333" width="6" height="4"><use href="#tridown"/></svg>
 <div class="t c" style="left:33px;top:57.0px;font-size:12px;color:#333;">Tag</div>
 <div class="a" style="left:53px;top:54px;width:52px;height:17px;background:#c4c4c4;border-radius:2px"></div>
 <div class="t c" style="left:55px;top:56.5px;font-size:12px;color:#333;">Untaggec</div>
 <svg class="a" style="left:97px;top:61px;color:#333" width="6" height="4"><use href="#tridown"/></svg>
 <div class="t c" style="left:115px;top:57.0px;font-size:12px;color:#333;">Layer</div>
 <div class="a" style="left:144px;top:54px;width:44px;height:17px;background:#c4c4c4;border-radius:2px"></div>
 <div class="t c" style="left:146px;top:56.5px;font-size:12px;color:#333;">UI</div>
 <svg class="a" style="left:178px;top:61px;color:#333" width="6" height="4"><use href="#tridown"/></svg>
 <div class="a" style="left:0;top:78px;width:188px;height:2px;background:#8c8c8c"></div>
 <div class="a" style="left:0;top:80px;width:188px;height:21px;background:#aaaaaa"></div>
 <div class="a" style="left:0;top:101px;width:188px;height:176px;background:#a4a4a4"></div>
 <svg class="a" style="left:5px;top:87px;color:#555" width="6" height="6"><use href="#tridown"/></svg>
 <div class="a" style="left:17px;top:85px;width:9px;height:10px;border:2px dotted #555"></div>
 <div class="t c" style="left:46px;top:85.0px;font-size:12px;color:#1a1a1a;font-weight:bold;">Rect Transform</div>
 <div class="a" style="left:150px;top:86px;width:7px;height:8px;border-radius:50%;background:#444"></div>
 <div class="t" style="left:163px;top:84px;font-size:10px;color:#444">&#8646;</div>
 <div class="a" style="left:181px;top:85px;width:2px;height:2px;background:#555;box-shadow:0 4px #555,0 8px #555"></div>
 <div class="t c" style="left:28px;top:112.5px;font-size:9px;color:#333;">left</div>
 <div class="t c" style="left:48px;top:111.0px;font-size:12px;color:#333;">Pos X</div>
 <div class="t c" style="left:96px;top:111.0px;font-size:12px;color:#333;">Pos Y</div>
 <div class="t c" style="left:144px;top:111.0px;font-size:12px;color:#333;">Pos Z</div>
 <div class="a" style="left:21px;top:128px;width:26px;height:36px;background:#9b9b9b;border-top:1px solid #c86060;border-left:1px solid #c86060"></div>
 <div class="a" style="left:27px;top:138px;width:13px;height:17px;border:1.5px solid #555"></div>
 <div class="t" style="left:6px;top:136px;font-size:9px;color:#333;transform:rotate(-90deg);transform-origin:50% 50%">top</div>
 <div class="a" style="left:48px;top:126px;width:44px;height:15px;background:#c4c4c4;border-radius:2px"></div>
 <div class="t c" style="left:50px;top:127.5px;font-size:12px;color:#222;">0</div>
 <div class="a" style="left:96px;top:126px;width:44px;height:15px;background:#c4c4c4;border-radius:2px"></div>
 <div class="t c" style="left:98px;top:127.5px;font-size:12px;color:#222;">0</div>
 <div class="a" style="left:144px;top:126px;width:44px;height:15px;background:#c4c4c4;border-radius:2px"></div>
 <div class="t c" style="left:146px;top:127.5px;font-size:12px;color:#222;">0</div>
 <div class="t c" style="left:48px;top:146.0px;font-size:12px;color:#333;">Width</div>
 <div class="t c" style="left:96px;top:146.0px;font-size:12px;color:#333;">Height</div>
 <div class="a" style="left:48px;top:162px;width:44px;height:16px;background:#c4c4c4;border-radius:2px"></div>
 <div class="t c" style="left:50px;top:164.0px;font-size:12px;color:#222;">998.8571</div>
 <div class="a" style="left:96px;top:162px;width:44px;height:16px;background:#c4c4c4;border-radius:2px"></div>
 <div class="t c" style="left:98px;top:164.0px;font-size:12px;color:#222;">768</div>
 <div class="a" style="left:151px;top:163px;width:17px;height:15px;background:#b4b4b4;border-radius:2px"></div>
 <div class="a" style="left:170px;top:163px;width:18px;height:15px;background:#b4b4b4;border-radius:2px"></div>
 <div class="a" style="left:154px;top:166px;width:9px;height:9px;border:1.5px dotted #444"></div>
 <div class="t c" style="left:175px;top:165.0px;font-size:12px;color:#333;">R</div>
 <svg class="a" style="left:6px;top:186px;color:#555" width="5" height="8"><use href="#tri"/></svg>
 <div class="t c" style="left:15px;top:184.0px;font-size:12px;color:#222;">Anchors</div>
 <div class="t c" style="left:15px;top:204.0px;font-size:12px;color:#333;">Pivot</div>
 <div class="t c" style="left:48px;top:204.0px;font-size:12px;color:#333;">X</div>
 <div class="a" style="left:56px;top:202px;width:36px;height:15px;background:#c4c4c4;border-radius:2px"></div>
 <div class="t c" style="left:58px;top:203.5px;font-size:12px;color:#222;">0</div>
 <div class="t c" style="left:96px;top:204.0px;font-size:12px;color:#333;">Y</div>
 <div class="a" style="left:105px;top:202px;width:35px;height:15px;background:#c4c4c4;border-radius:2px"></div>
 <div class="t c" style="left:107px;top:203.5px;font-size:12px;color:#222;">1</div>
 <div class="t c" style="left:15px;top:232.0px;font-size:12px;color:#333;">Rotatior</div>
 <div class="t c" style="left:49px;top:232.0px;font-size:12px;color:#333;">X</div>
 <div class="a" style="left:61px;top:231px;width:32px;height:15px;background:#c4c4c4;border-radius:2px"></div>
 <div class="t c" style="left:63px;top:232.5px;font-size:12px;color:#222;">0</div>
 <div class="t c" style="left:98px;top:232.0px;font-size:12px;color:#333;">Y</div>
 <div class="a" style="left:109px;top:231px;width:31px;height:15px;background:#c4c4c4;border-radius:2px"></div>
 <div class="t c" style="left:111px;top:232.5px;font-size:12px;color:#222;">0</div>
 <div class="t c" style="left:145px;top:232.0px;font-size:12px;color:#333;">Z</div>
 <div class="a" style="left:156px;top:231px;width:32px;height:15px;background:#c4c4c4;border-radius:2px"></div>
 <div class="t c" style="left:158px;top:232.5px;font-size:12px;color:#222;">0</div>
 <div class="t c" style="left:15px;top:252.0px;font-size:12px;color:#333;">Sca</div>
 <div class="t c" style="left:34px;top:250.5px;font-size:9px;color:#555;">&#8734;</div>
 <div class="t c" style="left:49px;top:252.0px;font-size:12px;color:#333;">X</div>
 <div class="a" style="left:61px;top:251px;width:32px;height:14px;background:#c4c4c4;border-radius:2px"></div>
 <div class="t c" style="left:63px;top:252.0px;font-size:12px;color:#222;">1</div>
 <div class="t c" style="left:98px;top:252.0px;font-size:12px;color:#333;">Y</div>
 <div class="a" style="left:109px;top:251px;width:31px;height:14px;background:#c4c4c4;border-radius:2px"></div>
 <div class="t c" style="left:111px;top:252.0px;font-size:12px;color:#222;">1</div>
 <div class="t c" style="left:145px;top:252.0px;font-size:12px;color:#333;">Z</div>
 <div class="a" style="left:156px;top:251px;width:32px;height:14px;background:#c4c4c4;border-radius:2px"></div>
 <div class="t c" style="left:158px;top:252.0px;font-size:12px;color:#222;">1</div>
 <div class="a" style="left:0;top:276px;width:188px;height:2px;background:#8c8c8c"></div>
 <div class="a" style="left:0;top:278px;width:188px;height:383px;background:#a1a1a1"></div>
 <div class="a" style="left:10px;top:286px;width:172px;height:22px;background:#b8b8b8;border-radius:2px"></div>
 <div class="t c" style="left:62px;top:291px;font-size:12px;color:#222">Add Component</div>
 <div class="a" style="left:0;top:19px;width:1px;height:642px;background:#8a8a8a"></div>
</div>
<!--/INSP-->
<!--WBM-->
<div id="wbm" class="a">
 <div class="a" style="left:0px;top:0px;width:261px;height:19px;background:#999;"></div>
 <div class="a" style="left:2px;top:1px;width:78px;height:18px;background:#a9a9a9;border-radius:3px 3px 0 0"></div>
 <div class="t c" style="left:5.0px;top:3.0px;font-size:12px;color:#333;">WBModelFixer</div>
 <div class="a" style="left:250px;top:5px;width:2px;height:2px;background:#555;box-shadow:0 4px #555,0 8px #555"></div>
 <div class="a" style="left:0px;top:19px;width:261px;height:305px;background:#a3a3a3;"></div>
 <div class="a" style="left:253px;top:19px;width:8px;height:292px;background:#a0a0a0;"></div>
 <div class="a" style="left:254px;top:32px;width:6px;height:68px;background:#8f8f8f;border-radius:3px"></div>
 <svg class="a" style="left:254px;top:22px" width="6" height="5"><path d="M0 5 L3 0 L6 5Z" fill="#444"/></svg>
 <svg class="a" style="left:254px;top:302px;color:#444" width="6" height="5"><use href="#tridown"/></svg>
 <div class="a" style="left:3px;top:28px;width:248px;height:2px;background:#2a2a2a;"></div>
 <div class="a" style="left:3px;top:30px;width:248px;height:22px;background:#a9a9a9;"></div>
 <div class="a" style="left:7px;top:41px;width:4px;height:5px;background:#111;"></div>
 <div class="t c" style="left:13.0px;top:37.0px;font-size:12px;color:#222;">Yw : Mesh, Material mch</div>
 <div class="a" style="left:4px;top:55px;width:246px;height:17px;background:#c0c0c0;border-radius:2px"></div>
 <div class="t c" style="left:121.0px;top:57.5px;font-size:12px;color:#333;">Apply</div>
 <div class="a" style="left:3px;top:86px;width:248px;height:2px;background:#2a2a2a;"></div>
 <div class="a" style="left:3px;top:88px;width:248px;height:22px;background:#a9a9a9;"></div>
 <div class="a" style="left:7px;top:99px;width:4px;height:5px;background:#111;"></div>
 <div class="t c" style="left:13.0px;top:95.0px;font-size:12px;color:#222;">Children irum bgg</div>
 <div class="t c" style="left:4.0px;top:114.0px;font-size:12px;color:#222;font-weight:bold;">Name :</div>
 <div class="a" style="left:74px;top:113px;width:176px;height:15px;background:#c6c6c6;border-radius:2px"></div>
 <div class="a" style="left:4px;top:132px;width:82px;height:18px;background:#7fa7e2;border:1px solid #5a86c8;border-radius:2px"></div>
 <div class="t c" style="left:15.0px;top:135.0px;font-size:12px;color:#1b2a44;">Custom name</div>
 <div class="a" style="left:90px;top:132px;width:82px;height:18px;background:#bdbdbd;border-radius:2px"></div>
 <div class="t c" style="left:103.0px;top:135.0px;font-size:12px;color:#333;">Sibling index</div>
 <div class="a" style="left:176px;top:132px;width:74px;height:18px;background:#bdbdbd;border-radius:2px"></div>
 <div class="a" style="left:176px;top:132px;width:74px;height:18px;overflow:hidden"><div class="t c" style="left:3px;top:3px;font-size:12px;color:#333">Mesh folder name</div></div>
 <div class="a" style="left:4px;top:154px;width:246px;height:17px;background:#c0c0c0;border-radius:2px"></div>
 <div class="t c" style="left:121.0px;top:156.5px;font-size:12px;color:#333;">Apply</div>
 <div class="a" style="left:3px;top:185px;width:248px;height:2px;background:#2a2a2a;"></div>
 <div class="a" style="left:3px;top:187px;width:248px;height:22px;background:#a9a9a9;"></div>
 <div class="a" style="left:7px;top:198px;width:4px;height:5px;background:#111;"></div>
 <div class="t c" style="left:13.0px;top:194.0px;font-size:12px;color:#222;">Pyojip tekscr Material ssg</div>
 <div class="a" style="left:4px;top:212px;width:246px;height:17px;background:#c0c0c0;border-radius:2px"></div>
 <div class="t c" style="left:121.0px;top:214.5px;font-size:12px;color:#333;">Apply</div>
 <div class="a" style="left:3px;top:243px;width:248px;height:2px;background:#2a2a2a;"></div>
 <div class="a" style="left:3px;top:245px;width:248px;height:22px;background:#a9a9a9;"></div>
 <div class="a" style="left:7px;top:256px;width:4px;height:5px;background:#111;"></div>
 <div class="t c" style="left:13.0px;top:252.0px;font-size:12px;color:#222;">Tekscheo Material ssg</div>
 <div class="a" style="left:4px;top:270px;width:246px;height:17px;background:#c0c0c0;border-radius:2px"></div>
 <div class="t c" style="left:121.0px;top:272.5px;font-size:12px;color:#333;">Apply</div>
 <div class="a" style="left:3px;top:289px;width:248px;height:18px;background:#a9a9a9;"></div>
 <div class="a" style="left:7px;top:295px;width:4px;height:5px;background:#111;"></div>
 <div class="t c" style="left:13.0px;top:291.0px;font-size:12px;color:#222;font-weight:bold;">Match Terrain Material</div>
 <div class="a" style="left:3px;top:307px;width:248px;height:2px;background:#ddd;"></div>
 <div class="a" style="left:0px;top:311px;width:253px;height:13px;background:#a0a0a0;"></div>
 <div class="a" style="left:13px;top:313px;width:220px;height:9px;background:#8f8f8f;border-radius:4px"></div>
 <svg class="a" style="left:6px;top:314px" width="5" height="7"><path d="M5 0 L0 3.5 L5 7Z" fill="#444"/></svg>
 <svg class="a" style="left:244px;top:314px;color:#444" width="5" height="7"><use href="#tri"/></svg>
 <div class="a" style="left:0px;top:0px;width:1px;height:324px;background:#8a8a8a;"></div>
</div>
<!--/WBM-->
<!--CONS-->
<div id="cons" class="a">
 <div class="a" style="left:0px;top:0px;width:188px;height:18px;background:#999;"></div>
 <div class="a" style="left:2px;top:1px;width:65px;height:17px;background:#a9a9a9;border-radius:3px 3px 0 0"></div>
 <div class="a" style="left:7px;top:4px;width:7px;height:9px;background:#555;border-radius:1px"></div>
 <div class="t c" style="left:18.0px;top:3.0px;font-size:12px;color:#333;">Console</div>
 <div class="a" style="left:181px;top:5px;width:2px;height:2px;background:#555;box-shadow:0 4px #555,0 8px #555"></div>
 <div class="a" style="left:0px;top:18px;width:188px;height:19px;background:#a9a9a9;"></div>
 <div class="t c" style="left:3.0px;top:22.0px;font-size:12px;color:#333;">Clear</div>
 <div class="a" style="left:30px;top:19px;width:1px;height:17px;background:#8c8c8c;"></div>
 <svg class="a" style="left:33px;top:26px;color:#333" width="6" height="5"><use href="#tridown"/></svg>
 <div class="a" style="left:42px;top:19px;width:1px;height:17px;background:#8c8c8c;"></div>
 <div class="t c" style="left:46.0px;top:22.0px;font-size:12px;color:#333;">Collapse</div>
 <div class="a" style="left:84px;top:19px;width:1px;height:17px;background:#8c8c8c;"></div>
 <div class="a" style="left:121px;top:19px;width:23px;height:17px;background:#c0c0c0;"></div>
 <div class="t c" style="left:125.0px;top:22.0px;font-size:12px;color:#333;">! 9</div>
 <svg class="a" style="left:147px;top:22px" width="12" height="11"><path d="M6 0 L12 11 H0Z" fill="#e0a800"/></svg>
 <div class="t c" style="left:161.0px;top:22.0px;font-size:12px;color:#333;">1</div>
 <div class="a" style="left:172px;top:21px;width:12px;height:13px;border-radius:50%;background:#d81818"></div>
 <div class="t c" style="left:181.0px;top:22.0px;font-size:12px;color:#333;">1</div>
 <div class="a" style="left:0px;top:37px;width:188px;height:287px;background:#a3a3a3;"></div>
 <div class="a" style="left:0;top:37px;width:180px;height:287px;overflow:hidden">
 <div class="a" style="left:9px;top:-17px;width:19px;height:21px;border-radius:50%;background:#d4d4d4"></div>
 <div class="a" style="left:11px;top:-1px;width:6px;height:6px;background:#d4d4d4;transform:skewX(30deg)"></div>
 <div class="a" style="left:17px;top:-12px;width:2.5px;height:9px;background:#333"></div>
 <div class="a" style="left:17px;top:-1px;width:2.5px;height:2.5px;background:#333"></div>
 <div class="t c" style="left:31px;top:-21px;font-size:12px;color:#222">[14:07:10] 00:00:11.00</div>
 <div class="t c" style="left:31px;top:-6px;font-size:12px;color:#222">UnityEngine.Debug:Log (object)</div>
 <div class="a" style="left:9px;top:21px;width:19px;height:21px;border-radius:50%;background:#d4d4d4"></div>
 <div class="a" style="left:11px;top:37px;width:6px;height:6px;background:#d4d4d4;transform:skewX(30deg)"></div>
 <div class="a" style="left:17px;top:26px;width:2.5px;height:9px;background:#333"></div>
 <div class="a" style="left:17px;top:37px;width:2.5px;height:2.5px;background:#333"></div>
 <div class="t c" style="left:31px;top:17px;font-size:12px;color:#222">[14:07:16] 00:00:17.06</div>
 <div class="t c" style="left:31px;top:32px;font-size:12px;color:#222">UnityEngine.Debug:Log (object)</div>
 <div class="a" style="left:9px;top:59px;width:19px;height:21px;border-radius:50%;background:#d4d4d4"></div>
 <div class="a" style="left:11px;top:75px;width:6px;height:6px;background:#d4d4d4;transform:skewX(30deg)"></div>
 <div class="a" style="left:17px;top:64px;width:2.5px;height:9px;background:#333"></div>
 <div class="a" style="left:17px;top:75px;width:2.5px;height:2.5px;background:#333"></div>
 <div class="t c" style="left:31px;top:55px;font-size:12px;color:#222">[14:07:22] 00:00:23.15</div>
 <div class="t c" style="left:31px;top:70px;font-size:12px;color:#222">UnityEngine.Debug:Log (object)</div>
 <div class="a" style="left:9px;top:97px;width:19px;height:21px;border-radius:50%;background:#d4d4d4"></div>
 <div class="a" style="left:11px;top:113px;width:6px;height:6px;background:#d4d4d4;transform:skewX(30deg)"></div>
 <div class="a" style="left:17px;top:102px;width:2.5px;height:9px;background:#333"></div>
 <div class="a" style="left:17px;top:113px;width:2.5px;height:2.5px;background:#333"></div>
 <div class="t c" style="left:31px;top:93px;font-size:12px;color:#222">[14:07:29] 00:00:29.33</div>
 <div class="t c" style="left:31px;top:108px;font-size:12px;color:#222">UnityEngine.Debug:Log (object)</div>
 <div class="a" style="left:9px;top:135px;width:19px;height:21px;border-radius:50%;background:#d4d4d4"></div>
 <div class="a" style="left:11px;top:151px;width:6px;height:6px;background:#d4d4d4;transform:skewX(30deg)"></div>
 <div class="a" style="left:17px;top:140px;width:2.5px;height:9px;background:#333"></div>
 <div class="a" style="left:17px;top:151px;width:2.5px;height:2.5px;background:#333"></div>
 <div class="t c" style="left:31px;top:131px;font-size:12px;color:#222">[14:07:35] 00:00:35.65</div>
 <div class="t c" style="left:31px;top:146px;font-size:12px;color:#222">UnityEngine.Debug:Log (object)</div>
 <div class="a" style="left:9px;top:172px;width:19px;height:21px;border-radius:50%;background:#d4d4d4"></div>
 <div class="a" style="left:11px;top:188px;width:6px;height:6px;background:#d4d4d4;transform:skewX(30deg)"></div>
 <div class="a" style="left:17px;top:177px;width:2.5px;height:9px;background:#333"></div>
 <div class="a" style="left:17px;top:188px;width:2.5px;height:2.5px;background:#333"></div>
 <div class="t c" style="left:31px;top:168px;font-size:12px;color:#222">[14:07:35] 00:00:35.65</div>
 <div class="t c" style="left:31px;top:183px;font-size:12px;color:#222">UnityEngine.Debug:Log (object)</div>
 </div>
 <div class="a" style="left:180px;top:37px;width:8px;height:274px;background:#a0a0a0;"></div>
 <div class="a" style="left:181px;top:127px;width:6px;height:95px;background:#8f8f8f;border-radius:3px"></div>
 <div class="a" style="left:0px;top:0px;width:1px;height:324px;background:#8a8a8a;"></div>
</div>
<!--/CONS-->
<!--YT-->
<div id="status" class="a">
 <div class="a" style="left:2px;top:6px;width:11px;height:13px;border-radius:50%;background:#c8c8c8"></div>
 <div class="a" style="left:6.5px;top:8px;width:2px;height:6px;background:#777"></div>
 <div class="t c" style="left:15px;top:8px;font-size:12px;color:#3a3a3a">00:00:35.65</div>
 <div class="a" style="left:1842px;top:3px;width:12px;height:15px;background:#666;border-radius:3px;opacity:.5"></div>
 <div class="a" style="left:1862px;top:4px;width:12px;height:14px;background:#555;border-radius:2px;opacity:.5"></div>
 <div class="a" style="left:1882px;top:4px;width:13px;height:14px;border:2px solid #666;border-radius:50%;opacity:.5"></div>
 <div class="a" style="left:1901px;top:4px;width:13px;height:14px;border:1.5px solid #888;border-radius:50%"></div>
</div>
<div class="t" style="left:1782px;top:528px;font-size:21px;font-weight:bold;color:#fff">+</div>
<div class="t" style="left:1802px;top:528px;font-size:24px;font-weight:bold;color:#fff;transform:scaleX(.97);transform-origin:0 0">20</div>
<svg class="a" style="left:1852px;top:528px" width="16" height="24" viewBox="0 0 16 24"><path d="M3.5 3 L12.5 12 L3.5 21" fill="none" stroke="#fff" stroke-width="2.4" stroke-linecap="round"/></svg>
<div class="a" style="left:12px;top:1019px;width:944px;height:4px;background:linear-gradient(90deg,#ff0033 0%,#ff0033 80%,#ff2f8f 100%)"></div>
<div class="a" style="left:956px;top:1019px;width:152px;height:4px;background:rgba(255,255,255,.5)"></div>
<div class="a" style="left:1108px;top:1019px;width:800px;height:4px;background:rgba(60,60,60,.6)"></div>
<div class="a" style="left:949px;top:1014px;width:14px;height:14px;border-radius:50%;background:#ff0033"></div>
<div class="a" style="left:12px;top:1031px;width:41px;height:41px;border-radius:50%;background:rgba(0,0,0,.31)"></div>
<div class="a" style="left:63px;top:1031px;width:41px;height:41px;border-radius:50%;background:rgba(0,0,0,.31)"></div>
<div class="a" style="left:112px;top:1031px;width:98px;height:41px;border-radius:21px;background:rgba(0,0,0,.31)"></div>
<div class="a" style="left:940px;top:1031px;width:41px;height:41px;border-radius:50%;background:rgba(0,0,0,.31)"></div>
<div class="a" style="left:1756px;top:1032px;width:152px;height:40px;border-radius:20px;background:rgba(0,0,0,.31)"></div>
<div class="a" style="left:1724px;top:960px;width:184px;height:40px;border-radius:20px;background:rgba(0,0,0,.31)"></div>
<div class="a" style="left:25px;top:1043px;width:4.5px;height:18px;background:#fff;border-radius:1px"></div>
<div class="a" style="left:34px;top:1043px;width:4.5px;height:18px;background:#fff;border-radius:1px"></div>
<svg class="a" style="left:72px;top:1041px" width="24" height="22" viewBox="0 0 24 22"><path d="M1 11 Q1 7 5 5.5 L13 1 V21 L5 16.5 Q1 15 1 11Z" fill="#fff"/><path d="M16 7 Q18.5 11 16 15" fill="none" stroke="#fff" stroke-width="1.8" stroke-linecap="round"/><path d="M19 4 Q23.5 11 19 18" fill="none" stroke="#fff" stroke-width="1.8" stroke-linecap="round"/></svg>
<div class="t" style="left:128px;top:1044px;font-size:14px;font-weight:bold;color:#fff">1:45 / 3:32</div>
<svg class="a" style="left:951px;top:1043px" width="18" height="14" viewBox="0 0 18 14"><path d="M2.5 11.5 L9 5 L15.5 11.5" fill="none" stroke="#fff" stroke-width="2.2" stroke-linecap="round"/></svg>
<svg class="a" style="left:1772px;top:1042px" width="24" height="20" viewBox="0 0 24 20"><rect x="1.5" y="1.5" width="21" height="17" fill="none" stroke="rgba(255,255,255,.45)" stroke-width="1.5"/><path d="M5 11 H10 M12.5 11 H19 M5 14.5 H12 M14 14.5 H19" stroke="rgba(255,255,255,.45)" stroke-width="1.5"/></svg>
<svg class="a" style="left:1820px;top:1040px" width="24" height="24" viewBox="0 0 24 24"><path d="M9.51 2.01 L14.49 2.01 L15.70 5.59 L19.41 4.85 L21.90 9.16 L19.40 12.00 L21.90 14.84 L19.41 19.15 L15.70 18.41 L14.49 21.99 L9.51 21.99 L8.30 18.41 L4.59 19.15 L2.10 14.84 L4.60 12.00 L2.10 9.16 L4.59 4.85 L8.30 5.59Z" fill="none" stroke="#fff" stroke-width="1.9" stroke-linejoin="round"/><circle cx="12" cy="12" r="3" fill="none" stroke="#fff" stroke-width="1.9"/></svg>
<svg class="a" style="left:1869px;top:1041px" width="23" height="22" viewBox="0 0 23 22"><path d="M2 2 L9 9 M9 3.5 V9 H3.5 M21 20 L14 13 M14 18.5 V13 H19.5" fill="none" stroke="#fff" stroke-width="2" stroke-linecap="square"/></svg>
<svg class="a" style="left:1732px;top:968px" width="24" height="24" viewBox="0 0 24 24"><path d="M3.2 13 Q3 11.5 5 11.3 L7.5 11 Q9 9.5 10 6 Q10.5 2.5 11.8 2 Q13.5 2 13.6 4.5 L13.2 9.8 L18.8 10 Q21.2 10.3 20.8 12.5 L20.2 16 Q20 19.5 18.5 21.2 L6.5 21.4 Q3.3 21 3.2 18Z" fill="none" stroke="#fff" stroke-width="1.8" stroke-linejoin="round"/></svg>
<svg class="a" style="left:1773px;top:968px" width="24" height="24" viewBox="0 0 24 24"><path d="M3.2 11 Q3 12.5 5 12.7 L7.5 13 Q9 14.5 10 18 Q10.5 21.5 11.8 22 Q13.5 22 13.6 19.5 L13.2 14.2 L18.8 14 Q21.2 13.7 20.8 11.5 L20.2 8 Q20 4.5 18.5 2.8 L6.5 2.6 Q3.3 3 3.2 6Z" fill="none" stroke="#fff" stroke-width="1.8" stroke-linejoin="round"/></svg>
<svg class="a" style="left:1820px;top:968px" width="24" height="24" viewBox="0 0 24 24"><path d="M3 4 Q3 2.5 4.5 2.5 H19.5 Q21 2.5 21 4 V15.5 Q21 17 19.5 17 H11 L7.5 21 V17 H4.5 Q3 17 3 15.5Z" fill="none" stroke="#fff" stroke-width="1.8" stroke-linejoin="round"/><path d="M7 7.5 H17 M7 11.5 H13" stroke="#fff" stroke-width="1.8"/></svg>
<svg class="a" style="left:1867px;top:968px" width="26" height="24" viewBox="0 0 26 24"><path d="M15 3 L24 11.5 L15 20 V15 Q7 14.5 3 21 Q4 10 15 8Z" fill="none" stroke="#fff" stroke-width="1.8" stroke-linejoin="round"/></svg>
<!--/YT-->
</body></html>
